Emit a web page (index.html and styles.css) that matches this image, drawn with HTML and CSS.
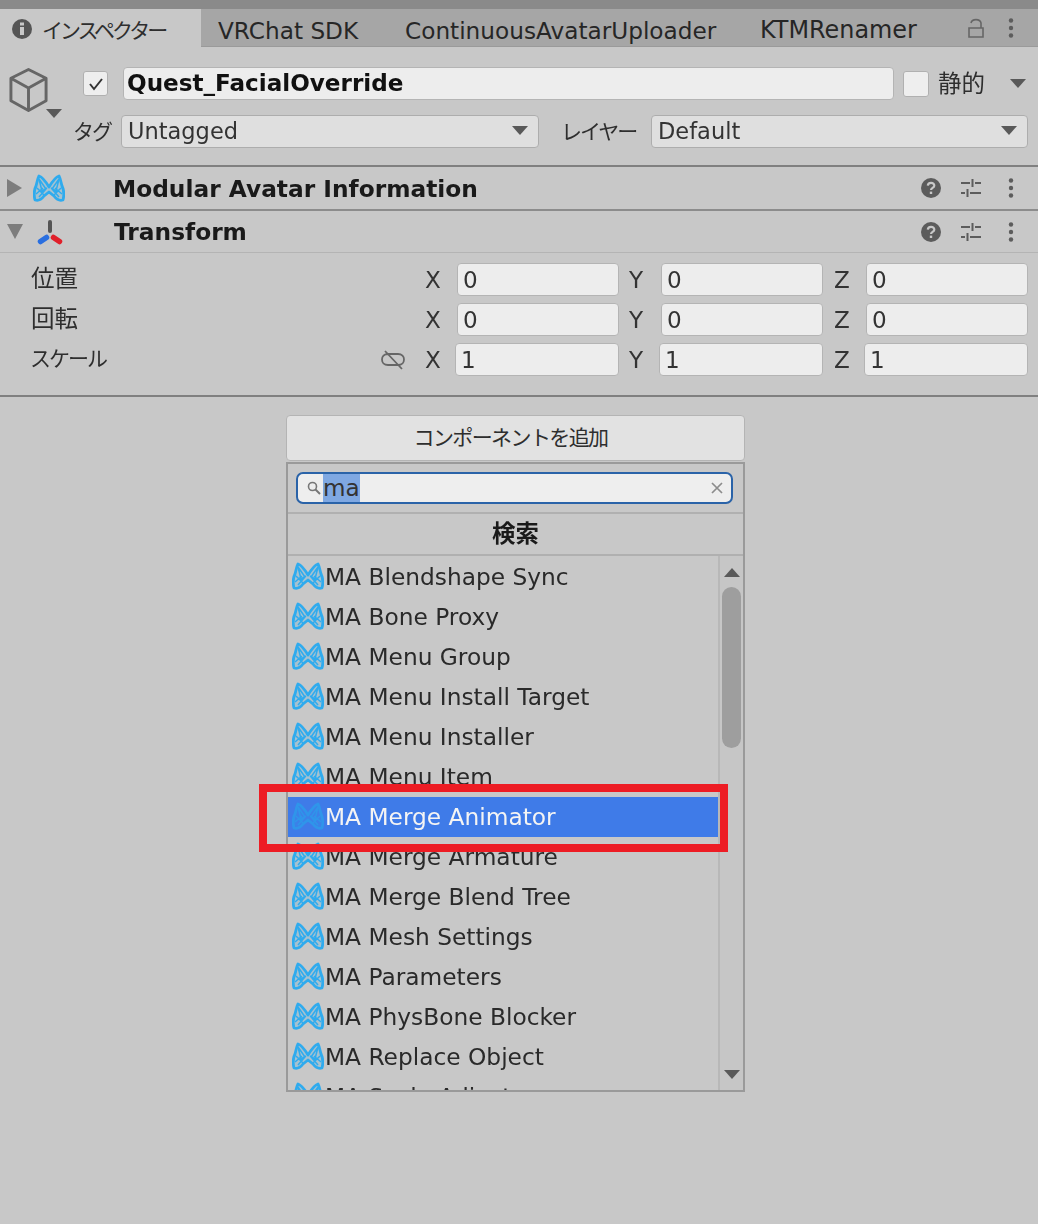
FILE: index.html
```html
<!DOCTYPE html>
<html lang="ja">
<head>
<meta charset="utf-8">
<title>Inspector</title>
<link rel="stylesheet" href="styles.css">
</head>
<body>
<svg class="defs" width="0" height="0" aria-hidden="true">
  <symbol id="ma" viewBox="0 0 32 28">
    <path d="M6 2 C9 3 13 8 16 13 C19 8 23 3 26 2 C28 6 28 9 29 12 C31 16 31 22 30 26 C27 27 24 26 21 22 L16 18 L11 22 C8 26 5 27 2 26 C1 22 1 16 3 12 C4 9 4 6 6 2 Z" fill="currentColor" fill-opacity=".22" stroke="currentColor" stroke-width="2.8" stroke-linejoin="round"/>
    <path d="M6 5 L13 15 L6 23 M6 5 L9 17 L14 14 M26 5 L19 15 L26 23 M26 5 L23 17 L18 14 M4 14 L11 21 M28 14 L21 21 M3 20 L10 14 M29 20 L22 14" fill="none" stroke="currentColor" stroke-width="1.5"/>
  </symbol>
  <symbol id="help" viewBox="0 0 20 20">
    <circle cx="10" cy="10" r="10" fill="#5c5c5c"/>
    <path d="M6.8 7.6 C7 3.8 13.4 4 13.3 7.6 C13.2 10 10 9.8 10 12" fill="none" stroke="#c8c8c8" stroke-width="2.2"/>
    <rect x="8.8" y="13.6" width="2.4" height="2.4" fill="#c8c8c8"/>
  </symbol>
  <symbol id="sliders" viewBox="0 0 20 20">
    <path d="M0 5 H9 M14 5 H20 M11.5 1 V9 M0 15 H4 M9 15 H20 M6.5 11 V19" fill="none" stroke="#5c5c5c" stroke-width="2"/>
  </symbol>
  <symbol id="dots" viewBox="0 0 6 20">
    <circle cx="3" cy="2.5" r="2.2" fill="#5c5c5c"/>
    <circle cx="3" cy="10" r="2.2" fill="#5c5c5c"/>
    <circle cx="3" cy="17.5" r="2.2" fill="#5c5c5c"/>
  </symbol>
</svg>

<div class="top-strip"></div>

<nav class="tabs">
  <div class="tab tab-active">
    <svg class="info" viewBox="0 0 20 20"><circle cx="10" cy="10" r="10" fill="#555"/><rect x="8" y="8" width="4" height="8" fill="#c8c8c8"/><rect x="8" y="3.5" width="4" height="3" fill="#c8c8c8"/></svg>
    <span class="kana tab-title">インスペクター</span>
  </div>
  <div class="tab tab-vrchat">VRChat SDK</div>
  <div class="tab tab-cau">ContinuousAvatarUploader</div>
  <div class="tab tab-ktm">KTMRenamer</div>
  <div class="tab-tools">
    <svg class="lock" viewBox="0 0 16 20"><path d="M3 5 C4 0.5 12 0.5 13 5 V10 M1 10 H15 V19 H1 Z" fill="none" stroke="#666" stroke-width="1.6"/></svg>
    <svg class="dots"><use href="#dots"/></svg>
  </div>
</nav>

<header class="object-head">
  <div class="cube-wrap">
    <svg class="cube" viewBox="0 0 42 46"><path d="M21 2 L39 11 V34 L21 44 L3 34 V11 Z M3 11 L21 21 L39 11 M21 21 V44" fill="none" stroke="#666" stroke-width="3" stroke-linejoin="round"/></svg>
    <span class="arrow cube-arrow"></span>
  </div>
  <div class="head-rows">
    <div class="head-row">
      <span class="check"><svg viewBox="0 0 16 14"><path d="M2 7 L6 12 L14 2" fill="none" stroke="#333" stroke-width="2"/></svg></span>
      <div class="name-field">Quest_FacialOverride</div>
      <span class="check check-static"></span>
      <span class="cjk static-label">静的</span>
      <span class="arrow static-arrow"></span>
    </div>
    <div class="head-row head-row-2">
      <span class="kana tag-label">タグ</span>
      <div class="select select-tag"><span>Untagged</span><span class="arrow"></span></div>
      <span class="kana layer-label">レイヤー</span>
      <div class="select select-layer"><span>Default</span><span class="arrow"></span></div>
    </div>
  </div>
</header>

<section class="comp-head comp-first">
  <span class="fold fold-right"></span>
  <svg class="comp-icon ma-icon"><use href="#ma"/></svg>
  <span class="comp-title">Modular Avatar Information</span>
  <div class="comp-tools">
    <svg class="t-help"><use href="#help"/></svg>
    <svg class="t-sliders"><use href="#sliders"/></svg>
    <svg class="t-dots"><use href="#dots"/></svg>
  </div>
</section>
<section class="comp-head comp-second">
  <span class="fold fold-down"></span>
  <svg class="comp-icon" viewBox="0 0 30 30">
    <path d="M15 5 V14" stroke="#555" stroke-width="4" stroke-linecap="round"/>
    <path d="M5.5 24.5 L11.5 20.5" stroke="#2a6fe0" stroke-width="5.5" stroke-linecap="round"/>
    <path d="M24.5 24.5 L18.5 20.5" stroke="#e0202a" stroke-width="5.5" stroke-linecap="round"/>
  </svg>
  <span class="comp-title">Transform</span>
  <div class="comp-tools">
    <svg class="t-help"><use href="#help"/></svg>
    <svg class="t-sliders"><use href="#sliders"/></svg>
    <svg class="t-dots"><use href="#dots"/></svg>
  </div>
</section>

<section class="transform">
  <div class="t-row">
    <span class="cjk t-label">位置</span>
    <span class="axis">X</span><div class="num">0</div>
    <span class="axis">Y</span><div class="num">0</div>
    <span class="axis">Z</span><div class="num">0</div>
  </div>
  <div class="t-row">
    <span class="cjk t-label">回転</span>
    <span class="axis">X</span><div class="num">0</div>
    <span class="axis">Y</span><div class="num">0</div>
    <span class="axis">Z</span><div class="num">0</div>
  </div>
  <div class="t-row t-row-scale">
    <span class="kana t-label">スケール</span>
    <svg class="unlink" viewBox="0 0 26 20"><path d="M8 4 H18 C26 4 26 15 18 15 H8 C0 15 0 4 8 4 Z M5 1 L22 19" fill="none" stroke="#666" stroke-width="1.8"/></svg>
    <span class="axis">X</span><div class="num">1</div>
    <span class="axis">Y</span><div class="num">1</div>
    <span class="axis">Z</span><div class="num">1</div>
  </div>
</section>

<main class="add-area">
  <div class="add-col">
    <div class="add-btn kana">コンポーネントを追加</div>
    <div class="popup">
      <div class="search-row">
        <div class="search-box">
          <svg class="mag" viewBox="0 0 14 14"><circle cx="5.5" cy="5.5" r="4" fill="none" stroke="#777" stroke-width="1.6"/><path d="M8.5 8.5 L13 13" stroke="#777" stroke-width="2"/></svg>
          <span class="search-sel">ma</span>
          <svg class="clear" viewBox="0 0 12 12"><path d="M1 1 L11 11 M11 1 L1 11" stroke="#8c8c8c" stroke-width="1.7"/></svg>
        </div>
      </div>
      <div class="popup-title cjk">検索</div>
      <div class="list-wrap">
        <ul class="list">
          <li class="item"><svg class="ma-icon item-icon"><use href="#ma"/></svg>MA Blendshape Sync</li>
          <li class="item"><svg class="ma-icon item-icon"><use href="#ma"/></svg>MA Bone Proxy</li>
          <li class="item"><svg class="ma-icon item-icon"><use href="#ma"/></svg>MA Menu Group</li>
          <li class="item"><svg class="ma-icon item-icon"><use href="#ma"/></svg>MA Menu Install Target</li>
          <li class="item"><svg class="ma-icon item-icon"><use href="#ma"/></svg>MA Menu Installer</li>
          <li class="item"><svg class="ma-icon item-icon"><use href="#ma"/></svg>MA Menu Item</li>
          <li class="item item-selected"><svg class="ma-icon item-icon"><use href="#ma"/></svg>MA Merge Animator</li>
          <li class="item"><svg class="ma-icon item-icon"><use href="#ma"/></svg>MA Merge Armature</li>
          <li class="item"><svg class="ma-icon item-icon"><use href="#ma"/></svg>MA Merge Blend Tree</li>
          <li class="item"><svg class="ma-icon item-icon"><use href="#ma"/></svg>MA Mesh Settings</li>
          <li class="item"><svg class="ma-icon item-icon"><use href="#ma"/></svg>MA Parameters</li>
          <li class="item"><svg class="ma-icon item-icon"><use href="#ma"/></svg>MA PhysBone Blocker</li>
          <li class="item"><svg class="ma-icon item-icon"><use href="#ma"/></svg>MA Replace Object</li>
          <li class="item"><svg class="ma-icon item-icon"><use href="#ma"/></svg>MA Scale Adjuster</li>
        </ul>
        <div class="scrollbar">
          <span class="sb-up"></span>
          <span class="sb-thumb"></span>
          <span class="sb-down"></span>
        </div>
      </div>
    </div>
    <div class="red-frame"></div>
  </div>
</main>
</body>
</html>
```

FILE: styles.css
```css
* { box-sizing: border-box; }
html, body { margin: 0; padding: 0; }
body {
  width: 1038px;
  height: 1224px;
  overflow: hidden;
  background: #c8c8c8;
  color: #1c1c1c;
  font-family: "DejaVu Sans", "Noto Sans CJK JP", sans-serif;
  font-size: 23.1px;
  filter: blur(0.45px);
}
.defs { position: absolute; }
.cjk { font-family: "Noto Sans CJK JP", sans-serif; font-size: 23.5px; color: #2e2e2e; }
.kana { font-family: "Noto Sans CJK JP", sans-serif; font-size: 21px; letter-spacing: -2px; color: #2e2e2e; white-space: nowrap; }

.top-strip { height: 9px; background: #8a8a8a; }

.tabs {
  display: flex;
  align-items: center;
  height: 38px;
  background: #a6a6a6;
  border-bottom: 1px solid #9a9a9a;
  white-space: nowrap;
  color: #262626;
}
.tab { display: flex; flex: none; align-items: center; height: 38px; padding-top: 5px; }
.tab-active { width: 201px; margin-bottom: -1px; height: 39px; background: #c8c8c8; padding-left: 12px; gap: 10px; padding-top: 5px; }
.tab-title { letter-spacing: -3px; padding-bottom: 3px; }
.info { width: 20px; height: 20px; margin-bottom: 3px; }
.tab-vrchat { margin-left: 17px; width: 187px; font-size: 23.2px; }
.tab-cau { width: 355px; font-size: 23.2px; }
.tab-ktm { width: 208px; font-size: 23.9px; }
.tab-tools { display: flex; flex: none; align-items: center; gap: 24px; }
.lock { width: 16px; height: 20px; }
.tab-tools .dots { width: 6px; height: 20px; }

.object-head {
  display: flex;
  height: 120px;
  padding: 20px 10px 0 8px;
  border-bottom: 2px solid #808080;
}
.cube-wrap { position: relative; width: 40px; }
.cube { width: 41px; height: 46px; display: block; }
.cube-arrow { position: absolute; left: 38px; top: 42px; }
.head-rows { flex: 1; display: flex; flex-direction: column; gap: 15px; }
.head-row { display: flex; align-items: center; height: 33px; }
.check {
  width: 25px; height: 25px;
  margin-left: 35px;
  background: #eeeeee;
  border: 1px solid #b0b0b0;
  border-radius: 3px;
  display: flex; align-items: center; justify-content: center;
}
.check svg { width: 16px; height: 14px; }
.name-field {
  width: 771px; height: 33px;
  margin-left: 15px;
  padding-left: 3px;
  background: #ededed;
  border: 1px solid #b4b4b4;
  border-radius: 4px;
  font-weight: 700;
  line-height: 30px;
  color: #111;
  font-size: 23.1px;
}
.check-static { margin-left: 9px; width: 26px; height: 26px; }
.static-label { margin-left: 9px; padding-bottom: 4px; }
.static-arrow { margin-left: 25px; }

.arrow {
  display: inline-block;
  width: 0; height: 0;
  border-left: 8px solid transparent;
  border-right: 8px solid transparent;
  border-top: 9px solid #595959;
}
.tag-label { width: 34px; margin-left: 25px; padding-bottom: 4px; }
.select {
  display: flex;
  align-items: center;
  justify-content: space-between;
  height: 33px;
  padding: 0 10px 2px 6px;
  background: #dfdfdf;
  border: 1px solid #adadad;
  border-radius: 4px;
  color: #333;
  font-size: 22.5px;
}
.select-tag { width: 418px; margin-left: 14px; }
.layer-label { width: 76px; margin-left: 22px; padding-bottom: 4px; }
.select-layer { width: 377px; margin-left: 14px; }

.comp-head {
  display: flex;
  align-items: center;
  height: 44px;
  border-bottom: 2px solid #8c8c8c;
  padding-left: 7px;
}
.comp-second { height: 42px; border-bottom: 1px solid #b4b4b4; }
.fold { width: 0; height: 0; display: block; }
.fold-right { border-top: 9px solid transparent; border-bottom: 9px solid transparent; border-left: 15px solid #7d7d7d; }
.fold-down { border-left: 8px solid transparent; border-right: 8px solid transparent; border-top: 15px solid #7d7d7d; }
.comp-icon { width: 32px; height: 30px; margin-left: 11px; }
.comp-first .comp-icon { height: 28px; }
.ma-icon { color: #2fabee; }
.comp-title { margin-left: 48px; font-weight: 700; font-size: 23.3px; color: #1a1a1a; }
.comp-tools { margin-left: auto; display: flex; align-items: center; padding-right: 24px; }
.t-help { width: 20px; height: 20px; }
.t-sliders { width: 20px; height: 20px; margin-left: 20px; }
.t-dots { width: 6px; height: 20px; margin-left: 27px; }

.transform {
  height: 144px;
  padding: 10px 9px 0 30px;
  display: flex;
  flex-direction: column;
  gap: 7px;
  border-bottom: 2px solid #808080;
}
.t-row { display: flex; align-items: center; height: 33px; }
.t-label { width: 395px; flex: none; padding-bottom: 5px; margin-left: 1px; margin-right: -1px; }
.axis { width: 32px; flex: none; color: #333; }
.num {
  width: 162px; height: 33px;
  flex: none;
  background: #ededed;
  border: 1px solid #b4b4b4;
  border-radius: 4px;
  padding-left: 5px;
  margin-right: 10px;
  line-height: 33px;
  color: #333;
}
.num:nth-of-type(2) { margin-right: 11px; }
.t-row-scale .t-label { width: 350px; margin-left: 0; margin-right: 0; }
.unlink { width: 26px; height: 20px; margin-right: 19px; flex: none; }
.t-row-scale .axis { width: 30px; }
.t-row-scale .num { width: 164px; }

.add-area { padding: 18px 0 0 286px; }
.add-col { position: relative; width: 459px; }
.add-btn {
  height: 46px;
  background: #e2e2e2;
  border: 1px solid #b4b4b4;
  border-radius: 4px;
  text-align: center;
  line-height: 41px;
  padding-right: 10px;
  letter-spacing: -1.6px;
}
.popup {
  margin-top: 1px;
  height: 630px;
  border: 2px solid #9a9a9a;
  display: flex;
  flex-direction: column;
  overflow: hidden;
}
.search-row { height: 50px; padding: 8px 10px 0 8px; border-bottom: 2px solid #b0b0b0; flex: none; }
.search-box {
  display: flex;
  align-items: center;
  height: 32px;
  padding: 0 8px 0 9px;
  background: #eeeeee;
  border: 2px solid #2a63a8;
  border-radius: 7px;
}
.mag { width: 14px; height: 14px; }
.search-sel { margin-left: 2px; background: #7fa8e2; line-height: 28px; height: 28px; color: #333; }
.clear { width: 12px; height: 12px; margin-left: auto; }
.popup-title {
  flex: none;
  height: 42px;
  text-align: center;
  line-height: 36px;
  font-weight: 700;
  color: #1a1a1a;
  border-bottom: 2px solid #b0b0b0;
}
.list-wrap { flex: 1; display: flex; min-height: 0; }
.list { flex: 1; list-style: none; margin: 0; padding: 1px 0 0; overflow: hidden; font-size: 23.3px; }
.item { display: flex; align-items: center; height: 40px; padding-bottom: 2px; color: #2a2a2a; white-space: nowrap; }
.item-icon { width: 32px; height: 28px; margin: 0 1px 0 4px; flex: none; }
.item-selected { background: #3f7be8; color: #f4f4f4; }
.item-selected .ma-icon { color: #2f95ea; }

.scrollbar {
  flex: none;
  width: 25px;
  display: flex;
  flex-direction: column;
  align-items: center;
  border-left: 2px solid #b8b8b8;
  background: #c6c6c6;
}
.sb-up { margin-top: 12px; width: 0; height: 0; border-left: 8px solid transparent; border-right: 8px solid transparent; border-bottom: 9px solid #595959; }
.sb-thumb { margin-top: 10px; width: 19px; height: 161px; border-radius: 10px; background: #9e9e9e; }
.sb-down { margin-top: auto; margin-bottom: 11px; width: 0; height: 0; border-left: 8px solid transparent; border-right: 8px solid transparent; border-top: 9px solid #595959; }

.red-frame {
  position: absolute;
  left: -27px; top: 369px;
  width: 469px; height: 68px;
  border: 8px solid #ed1c24;
  pointer-events: none;
}
```
